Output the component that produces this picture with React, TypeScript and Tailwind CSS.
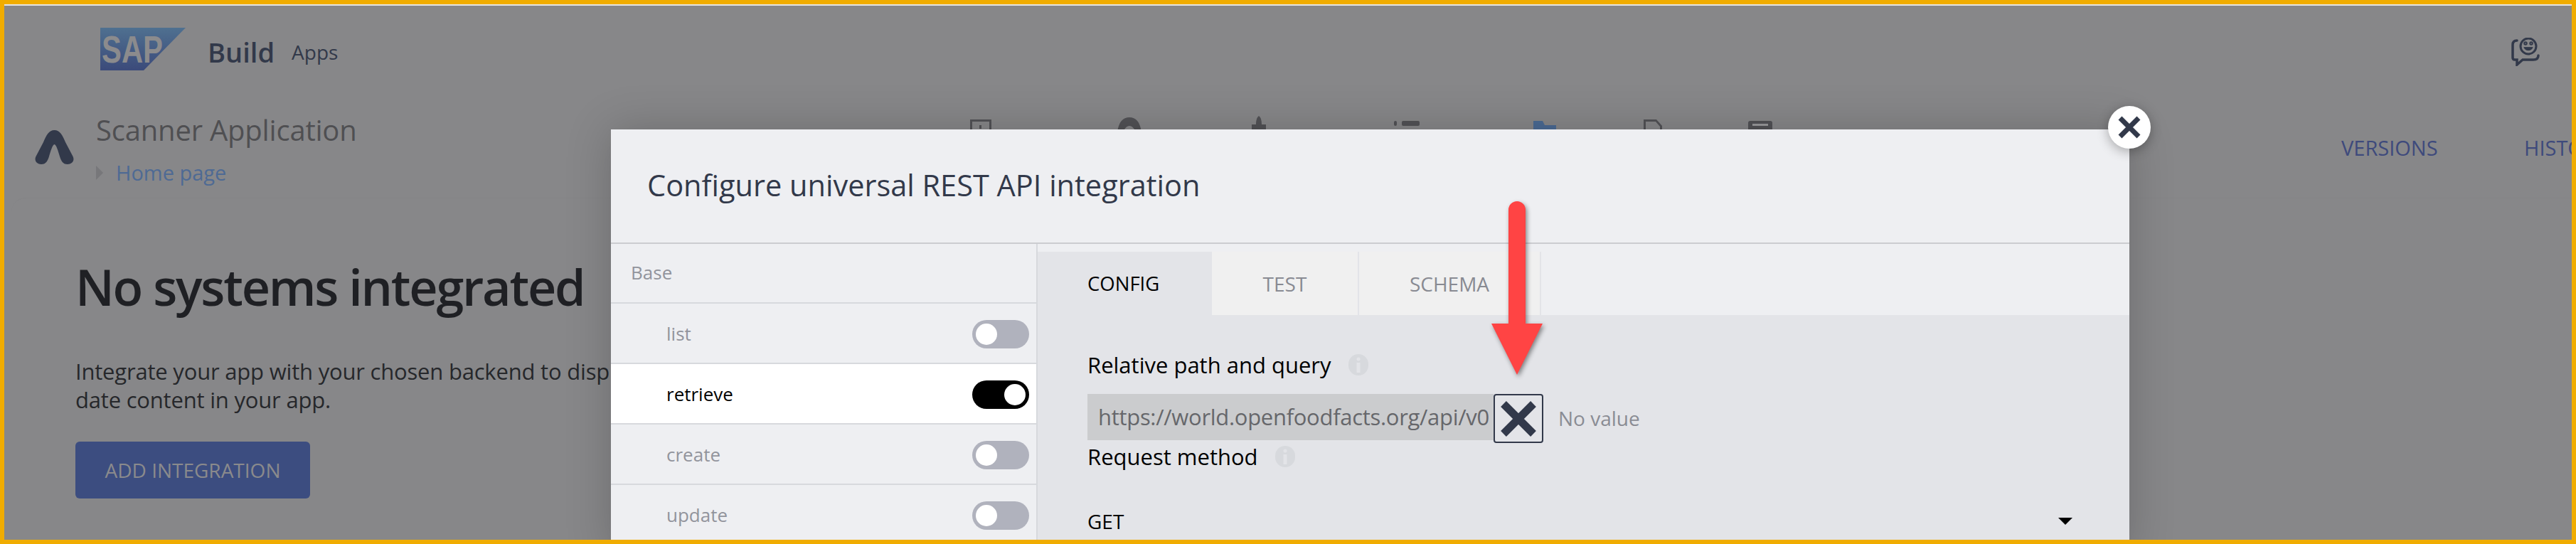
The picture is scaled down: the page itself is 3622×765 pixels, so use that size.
import React from 'react';

const sans = 'font-["Open_Sans",sans-serif]';

const rows = [
  { label: 'list', on: false },
  { label: 'retrieve', on: true },
  { label: 'create', on: false },
  { label: 'update', on: false },
];

const Toggle = ({ on }: { on: boolean }) => (
  <div className={`flex h-10 w-20 items-center rounded-full px-[5px] ${on ? 'justify-end bg-black' : 'justify-start bg-[#b0b2bd]'}`}>
    <div className="h-[30px] w-[30px] rounded-full bg-white" />
  </div>
);

const InfoDot = () => (
  <span className="flex h-[30px] w-[28px] items-center justify-center rounded-full bg-[#d7d9dd]">
    <svg width="8" height="22" viewBox="0 0 8 22"><circle cx="4" cy="3" r="2.5" fill="#e3e4e8" /><rect x="1.5" y="8" width="5" height="14" fill="#e3e4e8" /></svg>
  </span>
);

// app tab icons that stick out above the modal
const NavPeek = () => (
  <svg width="1400" height="24" viewBox="0 0 1400 24" className="ml-[1294px]" fill="#525256">
    <path d="M64 6h30v18h-3V9H67v15h-3z" />
    <rect x="77" y="14" width="3" height="5" />
    <path d="M271 24c2-15 8-21 17-21s15 6 17 21h-8c-2-5-5-9-9-9s-7 4-9 9z" />
    <path d="M470 1c3 2 4 7 4 12h6v7h-6v4h-2v-4h-4v4h-2v-4h-6v-7h6c0-5 1-10 4-12z" />
    <rect x="660" y="8" width="4" height="7" rx="2" />
    <rect x="671" y="8" width="25" height="7" rx="2" />
    <path fill="#4a6a94" d="M856 8h13l3 6h16v10h-32z" />
    <path d="M1011 24V6h18l8 9v9h-3v-8l-6-7h-14v15z" />
    <rect x="1158" y="8" width="34" height="16" rx="3" />
    <rect x="1164" y="12" width="22" height="3" fill="#9a9a9c" />
  </svg>
);

export default function App() {
  return (
    <div className={`relative h-[765px] w-[3622px] overflow-hidden border-[6px] border-[#f0ac00] bg-[#878789] ${sans}`}>
      <div className="h-[2px] bg-[#e4e4e4]" />

      <header className="flex h-[130px] items-center justify-between pl-[135px] pr-[45px]">
        <div className="flex items-center">
          <svg width="120" height="60" viewBox="0 0 120 60" className="mb-[8px]">
            <defs>
              <linearGradient id="sap" x1="0" y1="0" x2="0" y2="1">
                <stop offset="0" stopColor="#4f7090" />
                <stop offset="1" stopColor="#3b4a7a" />
              </linearGradient>
            </defs>
            <path d="M0 0h120L61 60H0z" fill="url(#sap)" />
            <text x="2" y="49" fontFamily="Liberation Sans, sans-serif" fontWeight="700" fontSize="53" textLength="86" lengthAdjust="spacingAndGlyphs" fill="#8b8b8d">SAP</text>
          </svg>
          <span className="ml-[31px] text-[38px] font-semibold text-[#32394a]">Build</span>
          <span className="ml-[24px] text-[28px] text-[#32394a]">Apps</span>
        </div>
        <svg width="40" height="40" viewBox="0 0 40 40" fill="none" stroke="#32394a" strokeWidth="3.5" strokeLinecap="round">
          <path d="M8 4C3 4 2 7 2 10v18c0 2 1 3 3 3h3v7l8-7h15c5 0 7-2 7-6" />
          <circle cx="24" cy="12" r="11" strokeWidth="3" />
          <path d="M18 14c2 5 10 5 12 0z" fill="#32394a" strokeWidth="1" />
          <circle cx="20" cy="8" r="1" />
          <circle cx="28" cy="8" r="1" />
        </svg>
      </header>

      <div className="flex h-[140px] items-start pl-[43px]">
        <svg width="55" height="48" viewBox="0 0 55 48" className="mt-[45px]" fill="#32394a">
          <path d="M27.5 0C35 0 39 7 43 17L53 36C57 43 52 48 46 48C39 48 37 43 35 37C33 30 30 20 27.5 20C25 20 22 30 20 37C18 43 16 48 9 48C3 48 -2 43 2 36L12 17C16 7 20 0 27.5 0z" />
        </svg>
        <div className="ml-[31px] flex flex-col">
          <span className="mt-[18px] text-[40px] leading-[54px] tracking-[-0.2px] text-[#4f4f52]">Scanner Application</span>
          <div className="mt-[13px] flex items-center">
            <span className="h-0 w-0 border-y-[10px] border-l-[10px] border-y-transparent border-l-[#77777a]" />
            <span className="ml-[18px] text-[29px] leading-[40px] text-[#4e6a94]">Home page</span>
          </div>
        </div>
      </div>

      <main className="ml-[10px] h-[500px] rounded-tl-[20px] border-t border-[#858587] pl-[90px]">
        <h1 className="mt-[76px] whitespace-nowrap text-[70px] font-semibold leading-[96px] tracking-[-2.2px] text-[#1f2024]">No systems integrated</h1>
        <p className="mt-[51px] w-[800px] whitespace-nowrap text-[31px] leading-[40px] tracking-[-0.2px] text-[#26272b]">
          Integrate your app with your chosen backend to display
          <br />
          date content in your app.
        </p>
        <button className="mt-[39px] flex h-[80px] w-[330px] items-center justify-center rounded-[6px] bg-[#3c4d80] text-[28px] text-[#8a8a8c]">ADD INTEGRATION</button>
      </main>

      <div className="absolute left-[3286px] top-[180px] text-[29px] text-[#3e4a7c]">VERSIONS</div>
      <div className="absolute left-[3543px] top-[180px] whitespace-nowrap text-[29px] text-[#3e4a7c]">HISTORY</div>

      <div className="absolute left-0 top-[156px]"><NavPeek /></div>

      {/* modal */}
      <section className="absolute left-[853px] top-[176px] h-[600px] w-[2135px] bg-[#eeeff2] shadow-[0_0_60px_rgba(0,0,0,0.2)]">
        <div className="flex h-[161px] items-center border-b-[2px] border-[#cbccd0] pl-[51px] pb-[2px]">
          <h2 className="text-[41.5px] text-[#32394a]">Configure universal REST API integration</h2>
        </div>
        <div className="flex h-[440px]">
          <aside className="w-[600px] border-r-[2px] border-[#d7d9dd]">
            <div className="flex h-[84px] items-center border-b-[2px] border-[#d7d9dd] pl-[28px] pb-[2px] text-[26px] text-[#92949c]">Base</div>
            {rows.map(r => (
              <div key={r.label} className={`flex h-[85px] items-start justify-between border-b-[2px] border-[#d7d9dd] pl-[78px] pr-[10px] pt-[24px] ${r.on ? 'bg-white' : ''}`}>
                <span className={`text-[26px] leading-[36px] ${r.on ? 'text-black' : 'text-[#92949c]'}`}>{r.label}</span>
                <div className="-mt-[1px]"><Toggle on={r.on} /></div>
              </div>
            ))}
          </aside>
          <div className="flex flex-1 flex-col">
            <div className="flex h-[100px] items-end bg-[#eeeff2]">
              <div className="flex h-[89px] w-[245px] items-center bg-[#e3e4e8] pl-[70px] text-[27.5px] text-black">CONFIG</div>
              <div className="flex h-[89px] w-[207px] items-center justify-center border-r-[2px] border-[#e3e4e8] bg-[#f0f0f0] text-[28px] text-[#888a92]">TEST</div>
              <div className="flex h-[89px] w-[256px] items-center justify-center border-r-[2px] border-[#e3e4e8] bg-[#f0f0f0] text-[28px] text-[#888a92]">SCHEMA</div>
            </div>
            <div className="flex-1 bg-[#e3e4e8] pl-[70px]">
              <div className="mt-[50px] flex h-[40px] items-center">
                <span className="text-[31px] font-medium text-black">Relative path and query</span>
                <span className="ml-[24px]"><InfoDot /></span>
              </div>
              <div className="mt-[21px] flex items-start">
                <div className="flex h-[65px] w-[571px] items-center whitespace-nowrap bg-[#cbccce] pl-[15px] text-[31px] tracking-[-0.3px] text-[#66676b]">https://world.openfoodfacts.org/api/v0</div>
                <div className="flex h-[69px] w-[70px] items-center justify-center rounded-[4px] border-[2px] border-[#32394a]">
                  <svg width="52" height="52" viewBox="0 0 52 52"><path d="M5 5l42 42M47 5L5 47" stroke="#32394a" strokeWidth="11" /></svg>
                </div>
                <span className="ml-[21px] mt-[13px] text-[28px] text-[#8a8c94]">No value</span>
              </div>
              <div className="-mt-[1px] flex h-[40px] items-center">
                <span className="text-[31px] font-medium text-black">Request method</span>
                <span className="ml-[24px]"><InfoDot /></span>
              </div>
              <div className="mt-[50px] flex items-center justify-between pr-[80px] text-[28px] text-black">
                <span>GET</span>
                <span className="h-0 w-0 border-x-[10px] border-t-[10px] border-x-transparent border-t-black" />
              </div>
            </div>
          </div>
        </div>
      </section>

      {/* close button over the modal corner */}
      <button className="absolute left-[2958px] top-[143px] flex h-[60px] w-[60px] items-center justify-center rounded-full bg-white shadow-[0_4px_16px_rgba(0,0,0,0.3)]">
        <svg width="32" height="32" viewBox="0 0 32 32"><path d="M3 3l26 26M29 3L3 29" stroke="#32394a" strokeWidth="7" /></svg>
      </button>

      {/* annotation arrow */}
      <svg width="90" height="260" viewBox="0 0 90 260" className="absolute left-[2076px] top-[273px] drop-shadow-[2px_3px_3px_rgba(0,0,0,0.45)]">
        <path d="M39 16a12 12 0 0 1 24 0v160h24l-36 72-36-72h24z" fill="#ff4444" />
      </svg>
    </div>
  );
}
